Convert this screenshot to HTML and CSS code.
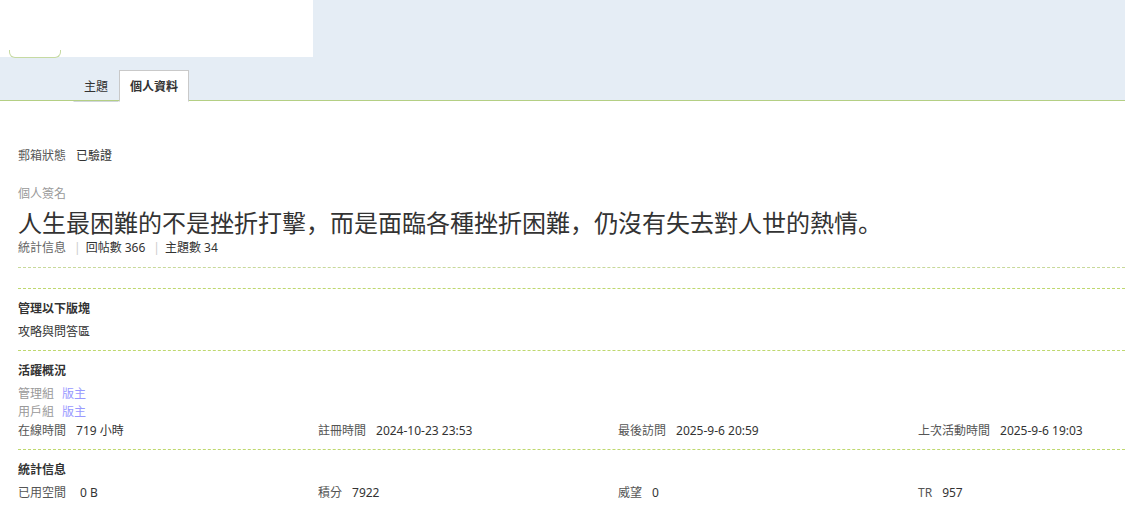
FILE: index.html
```html
<!DOCTYPE html>
<html>
<head>
    <title>個人資料</title>
    <link rel="stylesheet" href="styles.css">
</head>
<body>
    <div class="hd">
        <div class="logo"></div>
        <div class="avatar-edge"></div>
        <ul class="tabs">
            <li><a href="#">主題</a></li>
            <li class="on"><a href="#">個人資料</a></li>
        </ul>
    </div>

    <div class="bm">
        <div class="sec sec-top">
            <p class="line mail"><em>郵箱狀態</em>已驗證</p>
            <p class="line sub"><em class="gray">個人簽名</em></p>
            <p class="sign">人生最困難的不是挫折打擊，而是面臨各種挫折困難，仍沒有失去對人世的熱情。</p>
            <p class="line cnt"><em>統計信息</em><span class="pipe">|</span>回帖數 366<span class="pipe">|</span>主題數 34</p>
        </div>

        <div class="sec">
            <h3>管理以下版塊</h3>
            <p class="line">攻略與問答區</p>
        </div>

        <div class="sec">
            <h3>活躍概況</h3>
            <p class="line"><em class="gray tight">管理組</em><a href="#" class="grp">版主</a></p>
            <p class="line"><em class="gray tight">用戶組</em><a href="#" class="grp">版主</a></p>
            <div class="cols">
                <p class="line"><em>在線時間</em>719 小時</p>
                <p class="line"><em>註冊時間</em>2024-10-23 23:53</p>
                <p class="line"><em>最後訪問</em>2025-9-6 20:59</p>
                <p class="line"><em>上次活動時間</em>2025-9-6 19:03</p>
            </div>
        </div>

        <div class="sec">
            <h3>統計信息</h3>
            <div class="cols">
                <p class="line"><em class="wide">已用空間</em>0 B</p>
                <p class="line"><em>積分</em>7922</p>
                <p class="line"><em>威望</em>0</p>
                <p class="line"><em>TR</em>957</p>
            </div>
        </div>
    </div>
</body>
</html>
```

FILE: styles.css
```css
body { margin: 0; font-family: "Noto Sans", "Noto Sans CJK TC", sans-serif; font-size: 12px; color: #333; background: #fff; overflow-x: hidden; }
p, ul, h3 { margin: 0; padding: 0; }
a { text-decoration: none; }
em { font-style: normal; }

.hd { position: relative; height: 100px; background: #e5edf5; border-bottom: 1px solid #b4cf84; }
.logo { width: 313px; height: 57px; background: #fff; }
.avatar-edge { position: absolute; left: 9px; top: 50px; width: 50px; height: 7px; border: 1px solid #c6daa2; border-top: 0; border-radius: 0 0 6px 6px; background: #fff; }

.tabs { list-style: none; display: flex; margin: 13px 0 0 73px; height: 31px; }
.tabs li { margin-bottom: -1px; border: 1px solid transparent; border-bottom-color: #d0d6dc; }
.tabs a { display: block; padding: 2px 10px 0; line-height: 28px; color: #333; }
.tabs li.on { background: #fff; border-color: #c9c9c9; border-bottom-color: #fff; }
.tabs li.on a { font-weight: bold; }

.bm { padding: 46px 0 0 18px; }
.sec { border-top: 1px dashed #bed86e; padding: 11px 0 9px; }
.sec-top { border-top: 0; padding: 0 0 10px; margin-bottom: 20px; border-bottom: 1px dashed #c8d99a; }

.line { line-height: 18px; }
.line em { margin-right: 10px; color: #555; }
.line em.gray { color: #999; }
.line em.tight { margin-right: 8px; }
.line em.wide { margin-right: 14px; }
.mail { margin-bottom: 20px; }
.sub { margin-bottom: 5px; }
.sign { font-family: "Noto Sans CJK JP", "Noto Sans CJK TC", sans-serif; font-size: 24px; line-height: 28px; color: #333; margin-bottom: 3px; }
.cnt em { margin-right: 0; color: #666; }
.pipe { color: #ccc; padding: 0 5px 0 8px; }

h3 { font-size: 12px; line-height: 18px; margin-bottom: 5px; color: #333; }
.grp { color: #99f; }

.cols { display: grid; grid-template-columns: 300px 300px 300px 1fr; margin-top: 1px; }
```
